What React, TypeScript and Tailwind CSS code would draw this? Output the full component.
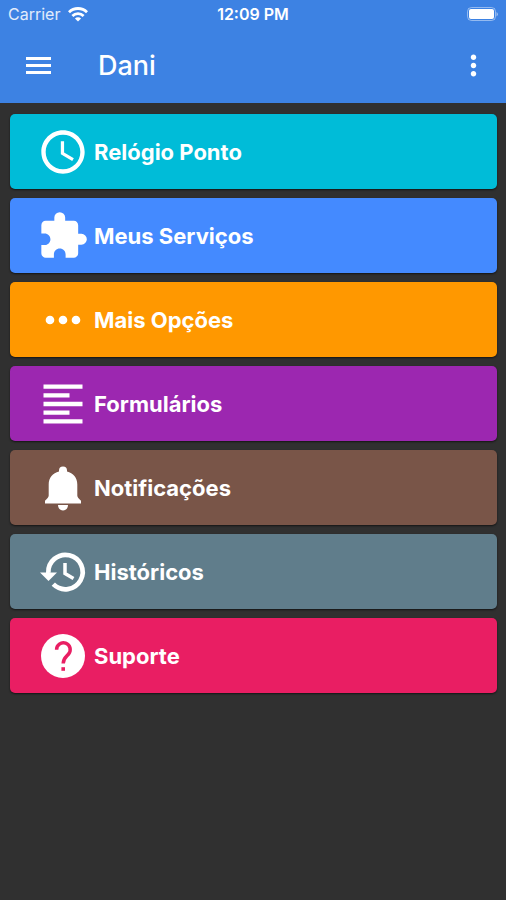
import {
  MdAccessTime,
  MdExtension,
  MdFormatAlignLeft,
  MdMoreHoriz,
  MdMoreVert,
} from "react-icons/md";

function BellIcon({ size }: { size: number }) {
  return (
    <svg width={size} height={size} viewBox="0 0 52 52" fill="currentColor">
      <path d="M26 4.5a4 4 0 0 1 4 4v1c6.2 1.7 10.3 6.2 10.3 13v11c0 2 1.5 3.2 3.7 5.2v2.8H8v-2.8c2.2-2 3.7-3.2 3.7-5.2v-11c0-6.8 4.1-11.3 10.3-13v-1a4 4 0 0 1 4-4z" />
      <path d="M21 43h10c0 3-2 5.5-5 5.5S21 46 21 43z" />
    </svg>
  );
}

function HistoryIcon({ size }: { size: number }) {
  return (
    <svg width={size} height={size} viewBox="0 0 52 52" fill="none" stroke="currentColor">
      <path d="M11.3 27a17.2 17.2 0 1 1 5 11.2" strokeWidth="4.7" />
      <path d="M28 17v10.5l8.5 5" strokeWidth="3.5" />
      <path d="M3 26.5h17L11.5 35z" fill="currentColor" stroke="none" />
    </svg>
  );
}

function HelpIcon({ size }: { size: number }) {
  return (
    <svg width={size} height={size} viewBox="0 0 52 52" fill="none">
      <circle cx="26" cy="26" r="22" fill="currentColor" />
      <path d="M19.6 19.8a6.8 6.8 0 1 1 12 4.2c-2.4 2.8-5.4 4.2-5.4 9.6" stroke="#e91e63" strokeWidth="3.5" />
      <path d="M24.4 37.2h3.6v3.6h-3.6z" fill="#e91e63" />
    </svg>
  );
}

const menuItems = [
  { label: "Relógio Ponto", icon: MdAccessTime, color: "bg-[#00bcd8]" },
  { label: "Meus Serviços", icon: MdExtension, color: "bg-[#448aff]" },
  { label: "Mais Opções", icon: MdMoreHoriz, color: "bg-[#ff9800]" },
  { label: "Formulários", icon: MdFormatAlignLeft, color: "bg-[#9c27b0]" },
  { label: "Notificações", icon: BellIcon, color: "bg-[#795548]" },
  { label: "Históricos", icon: HistoryIcon, color: "bg-[#607d8b]" },
  { label: "Suporte", icon: HelpIcon, color: "bg-[#e91e63]" },
];

function StatusBar() {
  return (
    <div className="grid grid-cols-3 items-center h-7 px-2 text-base">
      <div className="flex items-center gap-2 text-white/85">
        <span>Carrier</span>
        <svg width="20" height="15" viewBox="0 0 20 15" fill="none" stroke="white" strokeWidth="2.8">
          <path d="M1 5.2a12.8 12.8 0 0 1 18 0" />
          <path d="M4.4 8.9a8 8 0 0 1 11.2 0" />
          <path d="M10 14.6 6.9 11.5a4.4 4.4 0 0 1 6.2 0z" fill="white" stroke="none" />
        </svg>
      </div>
      <span className="text-center font-semibold">12:09 PM</span>
      <svg className="justify-self-end" width="31" height="15" viewBox="0 0 31 15">
        <rect x="0.5" y="0.5" width="28" height="13" rx="4" fill="none" stroke="white" strokeOpacity="0.45" />
        <rect x="2" y="2" width="25" height="10" rx="2" fill="white" />
        <path d="M29.5 5v4.500a2.500 2.500 0 0 0 0-4.500z" fill="white" fillOpacity="0.5" />
      </svg>
    </div>
  );
}

function AppBar() {
  return (
    <div className="flex items-center h-[75px] px-4">
      <button aria-label="Menu" className="p-2">
        <svg width="28" height="28" viewBox="0 0 28 28" fill="white">
          <path d="M2 5h25v3H2zM2 12h25v3H2zM2 19h25v3H2z" />
        </svg>
      </button>
      <h1 className="flex-1 ml-[38px] text-[27px] leading-8 font-medium">Dani</h1>
      <button aria-label="Mais">
        <MdMoreVert size={33} />
      </button>
    </div>
  );
}

export default function App() {
  return (
    <div className="min-h-screen bg-[#303030] text-white font-['Inter',sans-serif]">
      <header className="bg-[#3d82e3]">
        <StatusBar />
        <AppBar />
      </header>

      <main className="flex flex-col gap-[9px] pl-[10px] pr-[9px] pt-[11px]">
        {menuItems.map(({ label, icon: Icon, color }) => (
          <button
            key={label}
            className={`flex items-center gap-[5px] h-[75px] pl-[27px] rounded-[5px] shadow-[0_1px_2px_rgba(0,0,0,0.6)] text-[22px] leading-7 font-bold text-left ${color}`}
          >
            <Icon size={52} />
            {label}
          </button>
        ))}
      </main>
    </div>
  );
}
